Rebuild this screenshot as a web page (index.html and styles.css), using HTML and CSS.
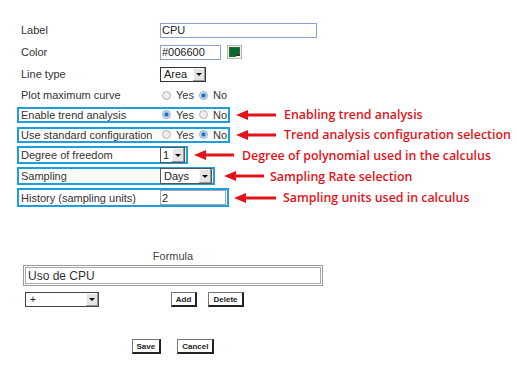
FILE: index.html
```html
<!DOCTYPE html>
<html>
<head>
<meta charset="utf-8">
<link rel="stylesheet" href="styles.css">
</head>
<body>
<div class="page">
  <div class="form">
    <div class="row">
      <span class="lbl">Label</span>
      <span class="input w-label">CPU</span>
    </div>
    <div class="row">
      <span class="lbl">Color</span>
      <span class="input w-color">#006600</span>
      <span class="swatch"><span class="swatch-fill"></span></span>
    </div>
    <div class="row">
      <span class="lbl">Line type</span>
      <span class="select w-area"><span class="sel-text">Area</span><span class="sel-btn"><span class="tri"></span></span></span>
    </div>
    <div class="row short">
      <span class="lbl">Plot maximum curve</span>
      <span class="radios"><span class="radio"></span>Yes<span class="radio on"></span>No</span>
    </div>

    <div class="note-row">
      <div class="box h16">
        <span class="lbl">Enable trend analysis</span>
        <span class="radios"><span class="radio on"></span>Yes<span class="radio"></span>No</span>
      </div>
      <svg class="arrow" width="40" height="10" viewBox="0 0 40 10"><path d="M0 5 L12 0 L12 3.6 L40 3.6 L40 6.4 L12 6.4 L12 10 Z" fill="#e3131b"/></svg>
      <span class="note">Enabling trend analysis</span>
    </div>
    <div class="note-row">
      <div class="box h16">
        <span class="lbl">Use standard configuration</span>
        <span class="radios"><span class="radio"></span>Yes<span class="radio on"></span>No</span>
      </div>
      <svg class="arrow" width="40" height="10" viewBox="0 0 40 10"><path d="M0 5 L12 0 L12 3.6 L40 3.6 L40 6.4 L12 6.4 L12 10 Z" fill="#e3131b"/></svg>
      <span class="note">Trend analysis configuration selection</span>
    </div>
    <div class="note-row">
      <div class="box h18">
        <span class="lbl">Degree of freedom</span>
        <span class="select w-deg"><span class="sel-text">1</span><span class="sel-btn"><span class="tri"></span></span></span>
      </div>
      <svg class="arrow" width="40" height="10" viewBox="0 0 40 10"><path d="M0 5 L12 0 L12 3.6 L40 3.6 L40 6.4 L12 6.4 L12 10 Z" fill="#e3131b"/></svg>
      <span class="note">Degree of polynomial used in the calculus</span>
    </div>
    <div class="note-row">
      <div class="box h18">
        <span class="lbl">Sampling</span>
        <span class="select w-days"><span class="sel-text">Days</span><span class="sel-btn"><span class="tri"></span></span></span>
      </div>
      <svg class="arrow a-wide" width="40" height="10" viewBox="0 0 40 10"><path d="M0 5 L12 0 L12 3.6 L40 3.6 L40 6.4 L12 6.4 L12 10 Z" fill="#e3131b"/></svg>
      <span class="note n-close">Sampling Rate selection</span>
    </div>
    <div class="note-row">
      <div class="box h19">
        <span class="lbl">History (sampling units)</span>
        <span class="input w-hist">2</span>
      </div>
      <svg class="arrow a-narrow" width="42" height="10" viewBox="0 0 42 10"><path d="M0 5 L12 0 L12 3.6 L42 3.6 L42 6.4 L12 6.4 L12 10 Z" fill="#e3131b"/></svg>
      <span class="note n-mid">Sampling units used in calculus</span>
    </div>
  </div>

  <div class="formula">
    <div class="formula-title">Formula</div>
    <div class="formula-input">Uso de CPU</div>
    <div class="formula-tools">
      <span class="select w-op"><span class="sel-text">+</span><span class="sel-btn"><span class="tri"></span></span></span>
      <span class="btn b-add">Add</span>
      <span class="btn b-del">Delete</span>
    </div>
    <div class="actions">
      <span class="btn">Save</span>
      <span class="btn">Cancel</span>
    </div>
  </div>
</div>
</body>
</html>
```

FILE: styles.css
```css
* { box-sizing: border-box; }
html, body { margin: 0; padding: 0; background: #fff; }
body {
  width: 517px;
  height: 365px;
  overflow: hidden;
  font-family: "Liberation Sans", Arial, sans-serif;
  font-size: 11px;
  color: #333;
}
.page { position: relative; }
.form {
  display: flex;
  flex-direction: column;
  padding-top: 19px;
}
.row {
  display: flex;
  align-items: center;
  height: 22px;
  padding-left: 21px;
}
.row.short { height: 20px; }
.lbl {
  width: 139px;
  flex: none;
  white-space: nowrap;
}
.input {
  flex: none;
  display: inline-flex;
  align-items: center;
  height: 15px;
  padding-left: 1px;
  border: 1px solid #8aa4cf;
  color: #222;
  font-size: 11px;
  background: #fff;
}
.w-label { width: 157px; }
.w-color { width: 61px; }
.w-hist { width: 66px; height: 15px; border-color: #9aa8b8; }
.swatch {
  position: relative;
  flex: none;
  width: 15px;
  height: 14px;
  margin-left: 6px;
  border: 1px solid #b8b8b0;
  background: #eeeee8;
  padding: 1px;
}
.swatch-fill {
  display: block;
  width: 100%;
  height: 100%;
  background: #006a2e;
  border: 1px solid #2e6b3a;
}
.swatch::after {
  content: "";
  position: absolute;
  right: 1px;
  bottom: 1px;
  width: 4px;
  height: 3px;
  background: #fff;
  border-top: 2px solid #333;
  box-sizing: border-box;
}
.select {
  flex: none;
  display: inline-flex;
  align-items: stretch;
  height: 15px;
  border: 1px solid #333;
  background: #fff;
  color: #222;
}
.sel-text {
  flex: 1;
  display: flex;
  align-items: center;
  padding-left: 3px;
  font-size: 11px;
}
.sel-btn {
  width: 13px;
  flex: none;
  display: flex;
  align-items: center;
  justify-content: center;
  background: #e4e4e4;
  border-left: 1px solid #fff;
  box-shadow: inset -1px -1px 0 #999, inset 1px 1px 0 #fafafa;
}
.tri {
  width: 0;
  height: 0;
  border-left: 3px solid transparent;
  border-right: 3px solid transparent;
  border-top: 3px solid #111;
}
.w-area { width: 46px; }
.w-deg { width: 25px; border-color: #555; height: 16px; }
.w-deg .sel-text { padding-left: 2px; }
.w-days { width: 52px; height: 16px; border-color: #555; }
.w-op { width: 74px; height: 15px; border-color: #444; margin-left: 2px; }
.w-op .sel-text { font-size: 10px; padding-left: 4px; }
.radios {
  flex: none;
  display: inline-flex;
  align-items: center;
  color: #333;
  padding-left: 2px;
}
.radio {
  width: 9px;
  height: 9px;
  border-radius: 50%;
  border: 1px solid #b4b4b4;
  background: radial-gradient(circle at 50% 50%, #f0f0f0 0 2px, #e6e6e6 4px);
  margin-right: 5px;
}
.radios .radio:nth-of-type(2) { margin-left: 5px; }
.radio.on {
  border-color: #8ea9c8;
  background: radial-gradient(circle at 50% 50%, #1e6fc0 0 1.6px, #a9c9ea 2.4px, #eef3f8 3.6px);
}
.note-row {
  display: flex;
  align-items: center;
  justify-content: flex-start;
  margin-left: 17px;
  margin-top: 1px;
  margin-bottom: 2px;
  width: 500px;
}
.box {
  flex: none;
  display: flex;
  align-items: center;
  border: 2px solid #1b9fdf;
  padding: 0 1px 0 2px;
}
.h16 { height: 16px; }
.h18 { height: 18px; }
.h19 { height: 19px; }
.arrow { flex: none; margin-left: 6px; }
.a-wide { margin-left: 9px; }
.a-narrow { margin-left: 5px; }
.note {
  flex: none;
  margin-left: 8px;
  font-family: "Open Sans", "Liberation Sans", sans-serif;
  font-weight: 600;
  font-size: 12.4px;
  color: #e3131b;
  white-space: nowrap;
}
.n-close { margin-left: 6px; }
.n-mid { margin-left: 7px; }
.formula {
  width: 300px;
  margin-left: 23px;
  margin-top: 40px;
  display: flex;
  flex-direction: column;
}
.formula-title {
  text-align: center;
  font-size: 11px;
  color: #444;
  height: 16px;
  line-height: 14px;
}
.formula-input {
  height: 21px;
  border: 1px solid #9a9a9a;
  box-shadow: inset 0 0 0 1px #fff, inset 0 0 0 2px #a8a8a8;
  display: flex;
  align-items: center;
  padding-left: 4px;
  font-size: 12px;
  color: #333;
}
.formula-tools {
  display: flex;
  align-items: center;
  margin-top: 6px;
}
.btn {
  display: inline-flex;
  align-items: center;
  justify-content: center;
  height: 15px;
  padding: 0 4px;
  background: #fff;
  border: 1px solid #777;
  border-right: 2px solid #222;
  border-bottom: 2px solid #222;
  font-family: "Liberation Sans", Arial, sans-serif;
  font-weight: bold;
  font-size: 8px;
  color: #222;
}
.b-add { margin-left: 72px; width: 26px; }
.b-del { margin-left: 11px; width: 36px; }
.actions {
  display: flex;
  justify-content: center;
  gap: 16px;
  margin-top: 32px;
}
```
